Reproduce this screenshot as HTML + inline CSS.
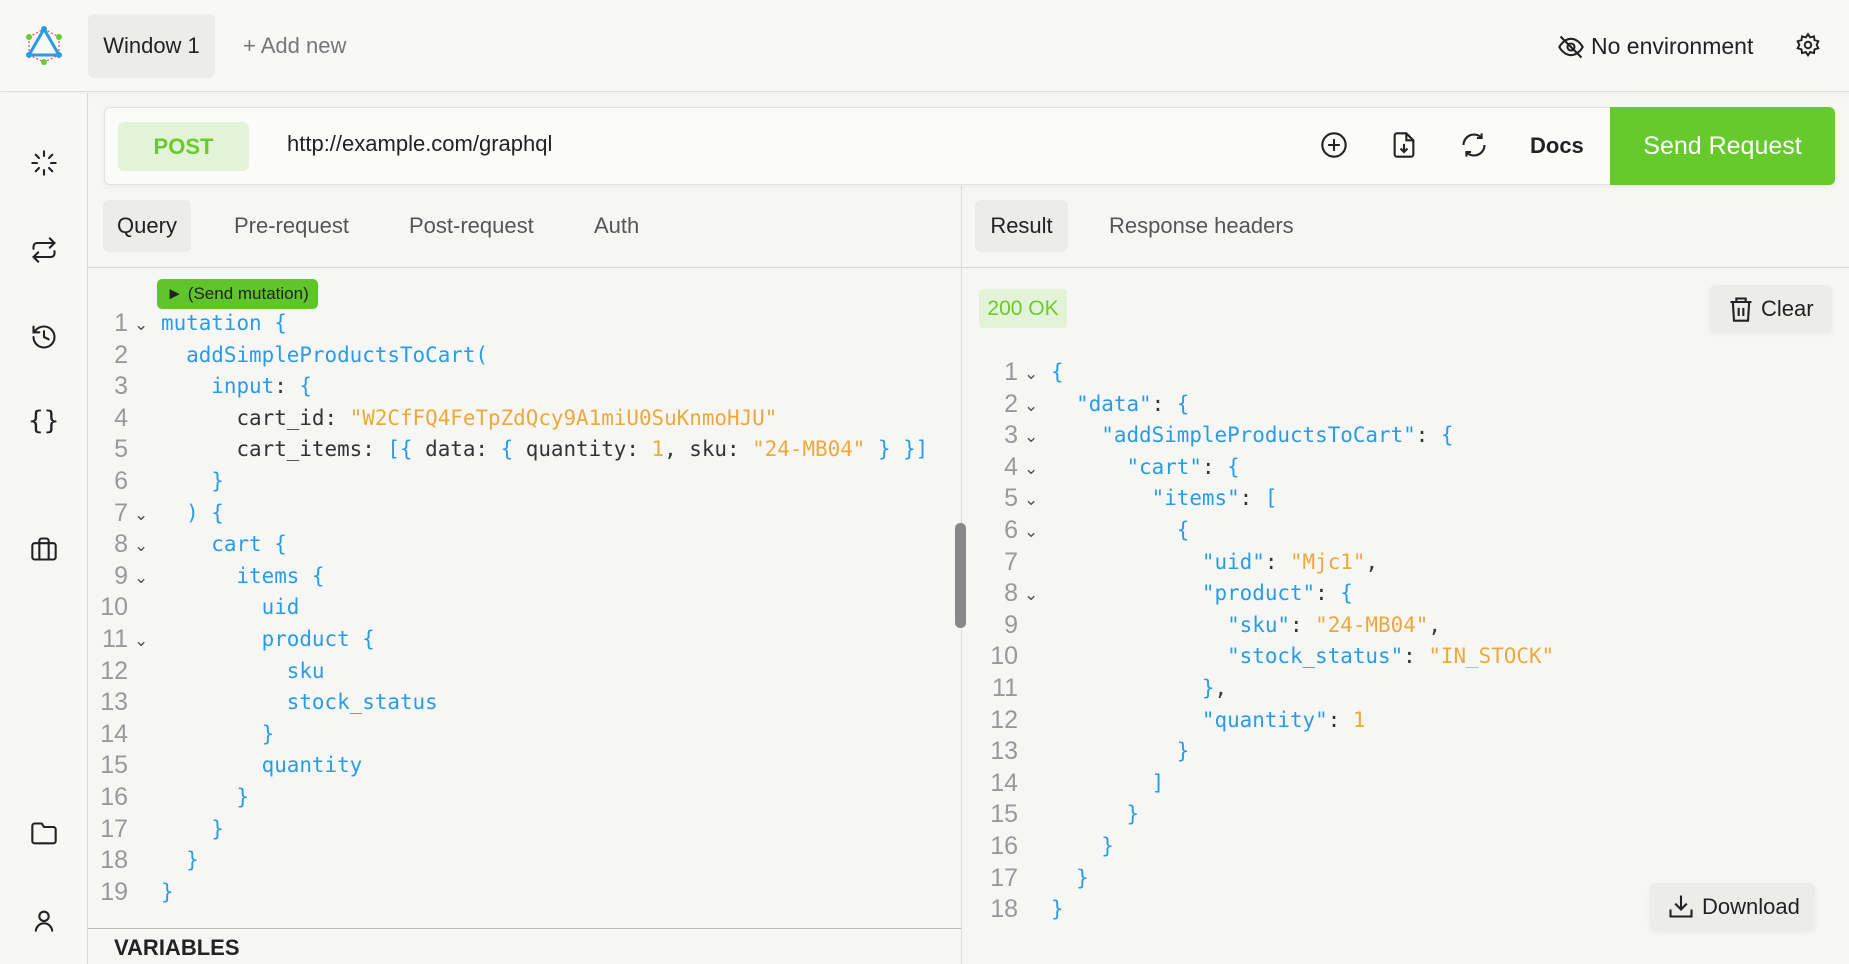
<!DOCTYPE html>
<html><head><meta charset="utf-8"><style>
*{margin:0;padding:0;box-sizing:border-box}
body{width:1849px;height:964px;overflow:hidden;background:#f6f7f5;font-family:"Liberation Sans",sans-serif;color:#222;position:relative}
.a{position:absolute}
.hdr{left:0;top:0;width:1849px;height:92px;background:#f8f8f7;border-bottom:1px solid #dedede;box-shadow:0 2px 6px rgba(0,0,0,.04)}
.side{left:0;top:93px;width:88px;height:871px;border-right:1px solid #d9d9d9;background:#f7f7f6}
.code{font-family:"DejaVu Sans Mono","Liberation Mono",monospace;font-size:20.9px;line-height:31.6px;white-space:pre}
.ln{color:#999;text-align:right;width:42px;font-family:"Liberation Sans",sans-serif;font-size:25px;white-space:pre;line-height:31.6px}
.b{color:#2a9be6}.o{color:#eea83a}.k{color:#333}
.fold{color:#555;font-size:17px;font-family:"DejaVu Sans",sans-serif;line-height:31.6px;white-space:pre}
.tab{font-size:22px;color:#555;top:200px;height:52px;line-height:52px}
svg{position:absolute}
</style></head><body>
<div class="a hdr"></div>
<svg style="left:24px;top:25px" width="40" height="40" viewBox="0 0 40 40"><path d="M20 4 L35 30 L5 30 Z" fill="none" stroke="#2a9be6" stroke-width="3"/><path d="M20 4 L35 12 M35 12 L35 30 M5 12 L5 30 M5 12 L20 4 M5 30 L20 37 L35 30" fill="none" stroke="#e55" stroke-width="1.3" stroke-dasharray="2 2"/><circle cx="20" cy="4" r="3" fill="#2a9be6"/><circle cx="35" cy="30" r="3" fill="#2a9be6"/><circle cx="5" cy="30" r="3" fill="#2a9be6"/><circle cx="5" cy="12" r="3" fill="#6c3"/><circle cx="35" cy="12" r="3" fill="#6c3"/><circle cx="20" cy="37" r="3" fill="#6c3"/></svg>
<div class="a" style="left:88px;top:14px;width:127px;height:64px;background:#ececea;border-radius:6px;font-size:22px;line-height:64px;text-align:center">Window 1</div>
<div class="a" style="left:243px;top:14px;font-size:22px;line-height:64px;color:#777">+ Add new</div>
<svg style="left:1557px;top:33px" width="28" height="28" viewBox="0 0 24 24" fill="none" stroke="#222" stroke-width="1.8"><path d="M2 12s3.5-7 10-7 10 7 10 7-3.5 7-10 7S2 12 2 12z"/><circle cx="12" cy="12" r="3"/><path d="M3 3l18 18"/></svg>
<div class="a" style="left:1591px;top:29px;font-size:23px;line-height:34px">No environment</div>
<svg style="left:1795px;top:32px" width="26" height="26" viewBox="0 0 24 24" fill="none" stroke="#222" stroke-width="1.8"><circle cx="12" cy="12" r="3"/><path d="M12 2l2 3 3.5-1 .5 3.5 3.5 1-1.5 3.5 1.5 3-3.5 1-.5 3.5-3.5-1-2 3-2-3-3.5 1-.5-3.5-3.5-1L4 12 2.5 8.5 6 7.5 6.5 4 10 5z"/></svg>

<div class="a side"></div>
<svg style="left:30px;top:149px" width="28" height="28" viewBox="0 0 24 24" fill="none" stroke="#222" stroke-width="1.8" stroke-linecap="round"><path d="M12 2v4M12 18v4M4.9 4.9l2.8 2.8M16.3 16.3l2.8 2.8M2 12h4M18 12h4M4.9 19.1l2.8-2.8M16.3 7.7l2.8-2.8"/></svg>
<svg style="left:30px;top:236px" width="28" height="28" viewBox="0 0 24 24" fill="none" stroke="#222" stroke-width="1.8" stroke-linecap="round"><path d="M17 2l4 4-4 4M3 11V9a3 3 0 013-3h15M7 22l-4-4 4-4M21 13v2a3 3 0 01-3 3H3"/></svg>
<svg style="left:30px;top:323px" width="28" height="28" viewBox="0 0 24 24" fill="none" stroke="#222" stroke-width="1.8" stroke-linecap="round"><path d="M3 12a9 9 0 109-9 9.7 9.7 0 00-6.7 2.7L3 8M3 3v5h5M12 7v5l4 2"/></svg>
<div class="a" style="left:28px;top:406px;font-size:26px;font-family:'DejaVu Sans Mono',monospace;color:#222">{}</div>
<svg style="left:30px;top:535px" width="28" height="28" viewBox="0 0 24 24" fill="none" stroke="#222" stroke-width="1.8"><rect x="2" y="7" width="20" height="14" rx="2"/><path d="M16 21V5a2 2 0 00-2-2h-4a2 2 0 00-2 2v16"/></svg>
<svg style="left:30px;top:820px" width="28" height="28" viewBox="0 0 24 24" fill="none" stroke="#222" stroke-width="1.8"><path d="M20 20a2 2 0 002-2V8a2 2 0 00-2-2h-8l-2-3H4a2 2 0 00-2 2v13a2 2 0 002 2z"/></svg>
<svg style="left:30px;top:907px" width="28" height="28" viewBox="0 0 24 24" fill="none" stroke="#222" stroke-width="1.8"><circle cx="12" cy="8" r="4"/><path d="M5 21a7 7 0 0114 0"/></svg>

<div class="a" style="left:104px;top:107px;width:1731px;height:78px;background:#fbfbfa;border:1px solid #e2e2e2;border-radius:6px;box-shadow:0 2px 6px rgba(0,0,0,.05)"></div>
<div class="a" style="left:118px;top:122px;width:131px;height:49px;background:#e3f3d8;border-radius:6px;color:#6acb2b;font-size:22px;font-weight:bold;line-height:49px;text-align:center">POST</div>
<div class="a" style="left:287px;top:128px;font-size:22px;line-height:32px;color:#222">http://example.com/graphql</div>
<svg style="left:1320px;top:131px" width="28" height="28" viewBox="0 0 24 24" fill="none" stroke="#222" stroke-width="1.8"><circle cx="12" cy="12" r="10"/><path d="M12 7v10M7 12h10"/></svg>
<svg style="left:1390px;top:131px" width="28" height="28" viewBox="0 0 24 24" fill="none" stroke="#222" stroke-width="1.8"><path d="M14 2H6a2 2 0 00-2 2v16a2 2 0 002 2h12a2 2 0 002-2V8z"/><path d="M14 2v6h6M12 11v7M9 15l3 3 3-3"/></svg>
<svg style="left:1460px;top:131px" width="28" height="28" viewBox="0 0 24 24" fill="none" stroke="#222" stroke-width="1.8"><path d="M21 12a9 9 0 01-15.5 6.2M3 12a9 9 0 0115.5-6.2M18.5 2v4h-4M5.5 22v-4h4"/></svg>
<div class="a" style="left:1530px;top:130px;font-size:22px;font-weight:bold;line-height:32px">Docs</div>
<div class="a" style="left:1610px;top:107px;width:225px;height:78px;background:#66c92c;border-radius:0 6px 6px 0;color:#fff;font-size:25px;line-height:78px;text-align:center">Send Request</div>

<div class="a" style="left:961px;top:186px;width:1px;height:778px;background:#dcdcdc"></div>
<div class="a" style="left:88px;top:267px;width:873px;height:1px;background:#d6d6d6"></div>
<div class="a" style="left:962px;top:267px;width:887px;height:1px;background:#d6d6d6"></div>
<div class="a tab" style="left:103px;width:88px;background:#ececea;border-radius:6px;color:#222;text-align:center">Query</div>
<div class="a tab" style="left:234px">Pre-request</div>
<div class="a tab" style="left:409px">Post-request</div>
<div class="a tab" style="left:594px">Auth</div>
<div class="a tab" style="left:975px;width:93px;background:#ececea;border-radius:6px;color:#222;text-align:center">Result</div>
<div class="a tab" style="left:1109px">Response headers</div>

<div class="a" style="left:157px;top:279px;width:161px;height:30px;background:#5fc52a;border-radius:5px;font-size:17px;line-height:30px;text-align:center;color:#222">► (Send mutation)</div>
<div class="a ln" style="left:86px;top:308px">1
2
3
4
5
6
7
8
9
10
11
12
13
14
15
16
17
18
19</div>
<div class="a fold" style="left:134px;top:310px">⌄
&nbsp;
&nbsp;
&nbsp;
&nbsp;
&nbsp;
⌄
⌄
⌄
&nbsp;
⌄</div>
<div class="a code" style="left:161px;top:308px"><span class="b">mutation {</span>
<span class="b">  addSimpleProductsToCart(</span>
<span class="b">    input</span><span class="k">:</span> <span class="b">{</span>
<span class="k">      cart_id: </span><span class="o">"W2CfFQ4FeTpZdQcy9A1miU0SuKnmoHJU"</span>
<span class="k">      cart_items: </span><span class="b">[{</span><span class="k"> data: </span><span class="b">{</span><span class="k"> quantity: </span><span class="o">1</span><span class="k">, sku: </span><span class="o">"24-MB04"</span> <span class="b">} }]</span>
<span class="b">    }</span>
<span class="b">  ) {</span>
<span class="b">    cart {</span>
<span class="b">      items {</span>
<span class="b">        uid</span>
<span class="b">        product {</span>
<span class="b">          sku</span>
<span class="b">          stock_status</span>
<span class="b">        }</span>
<span class="b">        quantity</span>
<span class="b">      }</span>
<span class="b">    }</span>
<span class="b">  }</span>
<span class="b">}</span></div>
<div class="a" style="left:955px;top:523px;width:11px;height:105px;background:#888;border-radius:5px"></div>
<div class="a" style="left:88px;top:928px;width:873px;height:1px;background:#bbb"></div>
<div class="a" style="left:114px;top:934px;font-size:22px;font-weight:bold;line-height:28px">VARIABLES</div>

<div class="a" style="left:979px;top:289px;width:88px;height:39px;background:#e3f3d8;border-radius:4px;color:#6acb2b;font-size:21px;line-height:39px;text-align:center">200 OK</div>
<div class="a" style="left:1710px;top:285px;width:122px;height:47px;background:#ececea;border-radius:6px;box-shadow:0 2px 6px rgba(0,0,0,.06)"></div>
<svg style="left:1727px;top:295px" width="28" height="28" viewBox="0 0 24 24" fill="none" stroke="#222" stroke-width="1.8"><path d="M3 6h18M8 6V3h8v3M5 6l1 16h12l1-16M10 11v7M14 11v7"/></svg>
<div class="a" style="left:1761px;top:293px;font-size:22px;line-height:32px">Clear</div>
<div class="a ln" style="left:976px;top:357px">1
2
3
4
5
6
7
8
9
10
11
12
13
14
15
16
17
18</div>
<div class="a fold" style="left:1024px;top:359px">⌄
⌄
⌄
⌄
⌄
⌄
&nbsp;
⌄</div>
<div class="a code" style="left:1051px;top:357px"><span class="b">{</span>
<span class="b">  "data"</span><span class="k">: </span><span class="b">{</span>
<span class="b">    "addSimpleProductsToCart"</span><span class="k">: </span><span class="b">{</span>
<span class="b">      "cart"</span><span class="k">: </span><span class="b">{</span>
<span class="b">        "items"</span><span class="k">: </span><span class="b">[</span>
<span class="b">          {</span>
<span class="b">            "uid"</span><span class="k">: </span><span class="o">"Mjc1"</span><span class="k">,</span>
<span class="b">            "product"</span><span class="k">: </span><span class="b">{</span>
<span class="b">              "sku"</span><span class="k">: </span><span class="o">"24-MB04"</span><span class="k">,</span>
<span class="b">              "stock_status"</span><span class="k">: </span><span class="o">"IN_STOCK"</span>
<span class="b">            }</span><span class="k">,</span>
<span class="b">            "quantity"</span><span class="k">: </span><span class="o">1</span>
<span class="b">          }</span>
<span class="b">        ]</span>
<span class="b">      }</span>
<span class="b">    }</span>
<span class="b">  }</span>
<span class="b">}</span></div>
<div class="a" style="left:1650px;top:883px;width:165px;height:47px;background:#ececea;border-radius:6px;box-shadow:0 2px 6px rgba(0,0,0,.06)"></div>
<svg style="left:1667px;top:892px" width="28" height="28" viewBox="0 0 24 24" fill="none" stroke="#222" stroke-width="1.8"><path d="M12 3v12M7 10l5 5 5-5M3 15v6h18v-6"/></svg>
<div class="a" style="left:1702px;top:891px;font-size:22px;line-height:32px">Download</div>
</body></html>
